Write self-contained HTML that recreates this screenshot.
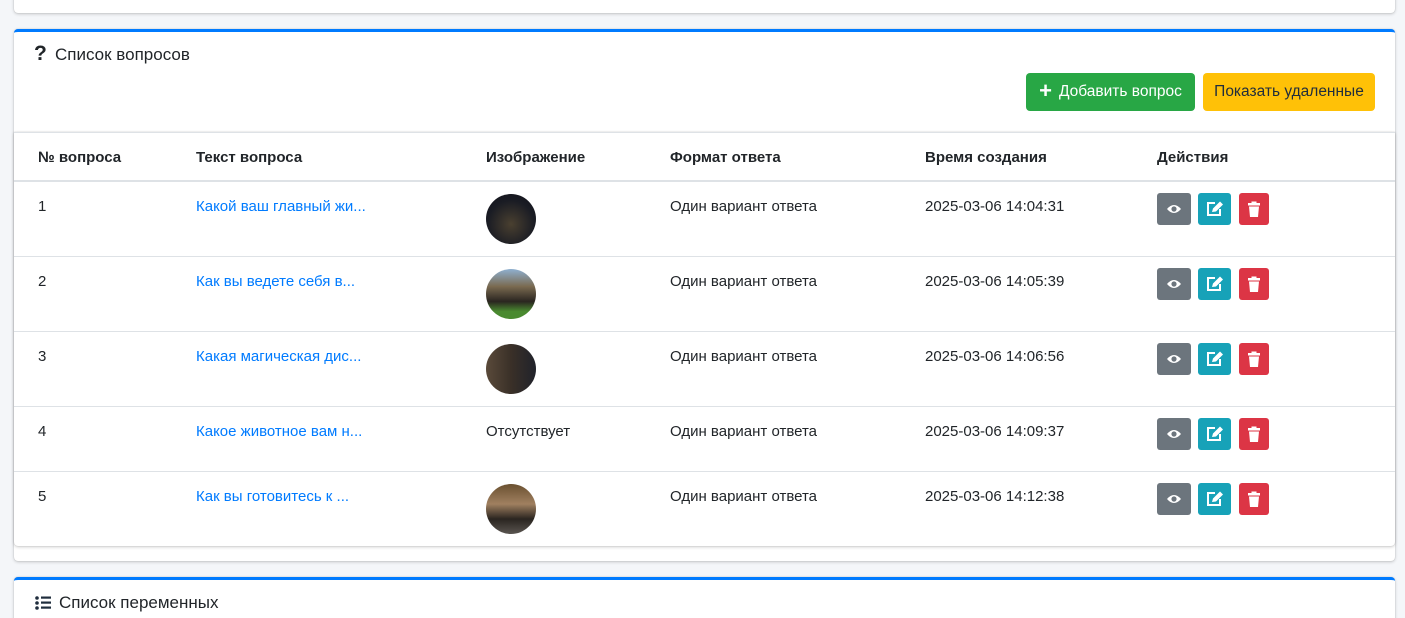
<!DOCTYPE html>
<html><head><meta charset="utf-8"><style>
*{box-sizing:border-box;margin:0;padding:0}
html,body{width:1405px;height:618px;overflow:hidden}
body{background:#f4f6f9;font-family:"Liberation Sans",sans-serif;color:#212529;position:relative;font-size:15px}
.card{position:absolute;background:#fff;border-radius:4px;box-shadow:0 0 1px rgba(0,0,0,.2),0 1px 3px rgba(0,0,0,.2)}
.a{position:absolute;white-space:nowrap;line-height:18px}
.btn{position:absolute;border-radius:4px;display:flex;align-items:center;justify-content:center;font-size:15.5px}
.hr{position:absolute;left:14px;width:1381px;height:1px;background:#dee2e6}
.th{font-weight:bold;top:149px}
.link{color:#007bff}
.img{position:absolute;left:486px;width:50px;height:50px;border-radius:50%}
</style></head><body>
<div class="card" style="left:14px;top:-10px;width:1381px;height:23px"></div>
<div class="card" style="left:14px;top:29px;width:1381px;height:532px;border-top:3px solid #007bff"></div>
<div class="card" style="left:14px;top:577px;width:1381px;height:60px;border-top:3px solid #007bff"></div>
<div class="a" style="left:34px;top:45px;font-size:21px;font-weight:bold">?</div>
<div class="a" style="left:55px;top:46px;font-size:17px">Список вопросов</div>
<div class="btn" style="left:1026px;top:73px;width:169px;height:38px;background:#28a745;color:#fff"><span style="font-size:22px;font-weight:bold;margin-right:7px;margin-top:-3px">+</span>Добавить вопрос</div>
<div class="btn" style="left:1203px;top:73px;width:172px;height:38px;background:#ffc107;color:#1f2d3d">Показать удаленные</div>
<div class="card" style="left:14px;top:132px;width:1381px;height:414px;border-radius:0 0 4px 4px"></div>
<div class="hr" style="top:132px"></div>
<div class="hr" style="top:180px;height:2px"></div>
<div class="hr" style="top:256px"></div>
<div class="hr" style="top:331px"></div>
<div class="hr" style="top:406px"></div>
<div class="hr" style="top:471px"></div>
<div class="a th" style="left:38px">№ вопроса</div>
<div class="a th" style="left:196px">Текст вопроса</div>
<div class="a th" style="left:486px">Изображение</div>
<div class="a th" style="left:670px">Формат ответа</div>
<div class="a th" style="left:925px">Время создания</div>
<div class="a th" style="left:1157px">Действия</div>

<div class="a" style="left:38px;top:198px">1</div>
<div class="a link" style="left:196px;top:198px">Какой ваш главный жи...</div>
<div class="img" style="top:194px;background:radial-gradient(circle at 50% 60%,#4a4030,#1a1c24 60%,#101018)"></div>
<div class="a" style="left:670px;top:198px">Один вариант ответа</div>
<div class="a" style="left:925px;top:198px">2025-03-06 14:04:31</div>

<div class="a" style="left:38px;top:273px">2</div>
<div class="a link" style="left:196px;top:273px">Как вы ведете себя в...</div>
<div class="img" style="top:269px;background:linear-gradient(#8fb0d0 0%,#7a6a50 35%,#2a2520 65%,#4a8a30 85%)"></div>
<div class="a" style="left:670px;top:273px">Один вариант ответа</div>
<div class="a" style="left:925px;top:273px">2025-03-06 14:05:39</div>

<div class="a" style="left:38px;top:348px">3</div>
<div class="a link" style="left:196px;top:348px">Какая магическая дис...</div>
<div class="img" style="top:344px;background:linear-gradient(90deg,#5a4a3a,#3a3028 50%,#20222a)"></div>
<div class="a" style="left:670px;top:348px">Один вариант ответа</div>
<div class="a" style="left:925px;top:348px">2025-03-06 14:06:56</div>

<div class="a" style="left:38px;top:423px">4</div>
<div class="a link" style="left:196px;top:423px">Какое животное вам н...</div>
<div class="a" style="left:486px;top:423px">Отсутствует</div>
<div class="a" style="left:670px;top:423px">Один вариант ответа</div>
<div class="a" style="left:925px;top:423px">2025-03-06 14:09:37</div>

<div class="a" style="left:38px;top:488px">5</div>
<div class="a link" style="left:196px;top:488px">Как вы готовитесь к ...</div>
<div class="img" style="top:484px;background:linear-gradient(#6a5030,#a08060 40%,#2a2520 70%,#5a5550)"></div>
<div class="a" style="left:670px;top:488px">Один вариант ответа</div>
<div class="a" style="left:925px;top:488px">2025-03-06 14:12:38</div>

<svg width="1405" height="618" style="position:absolute;left:0;top:0">
<defs>
<g id="acts">
<rect x="1157" y="0" width="34" height="32" rx="3" fill="#6c757d"/>
<path d="M1167 16 Q1174 8 1181 16 Q1174 24 1167 16Z" fill="#fff"/><circle cx="1174" cy="16" r="2.6" fill="#6c757d"/>
<rect x="1198" y="0" width="33" height="32" rx="3" fill="#17a2b8"/>
<path d="M1215 10 H1208 V22 H1220 V16" fill="none" stroke="#fff" stroke-width="2"/>
<path d="M1212 19 L1213 15.5 L1220 8.5 L1223 11.5 L1216 18.5Z" fill="#fff"/>
<rect x="1239" y="0" width="30" height="32" rx="3" fill="#dc3545"/>
<rect x="1248" y="10" width="12" height="2.5" fill="#fff"/><rect x="1251.5" y="8.5" width="5" height="2" fill="#fff"/>
<path d="M1249 13.5 H1259 L1258 24 H1250Z" fill="#fff"/>
</g></defs>
<use href="#acts" y="193"/><use href="#acts" y="268"/><use href="#acts" y="343"/><use href="#acts" y="418"/><use href="#acts" y="483"/>
<g fill="#1f2d3d"><circle cx="37" cy="598" r="1.8"/><circle cx="37" cy="603" r="1.8"/><circle cx="37" cy="608" r="1.8"/>
<rect x="41" y="596.5" width="10" height="2.2"/><rect x="41" y="601.5" width="10" height="2.2"/><rect x="41" y="606.5" width="10" height="2.2"/></g>
</svg>
<div class="a" style="left:59px;top:594px;font-size:17px">Список переменных</div>
</body></html>
